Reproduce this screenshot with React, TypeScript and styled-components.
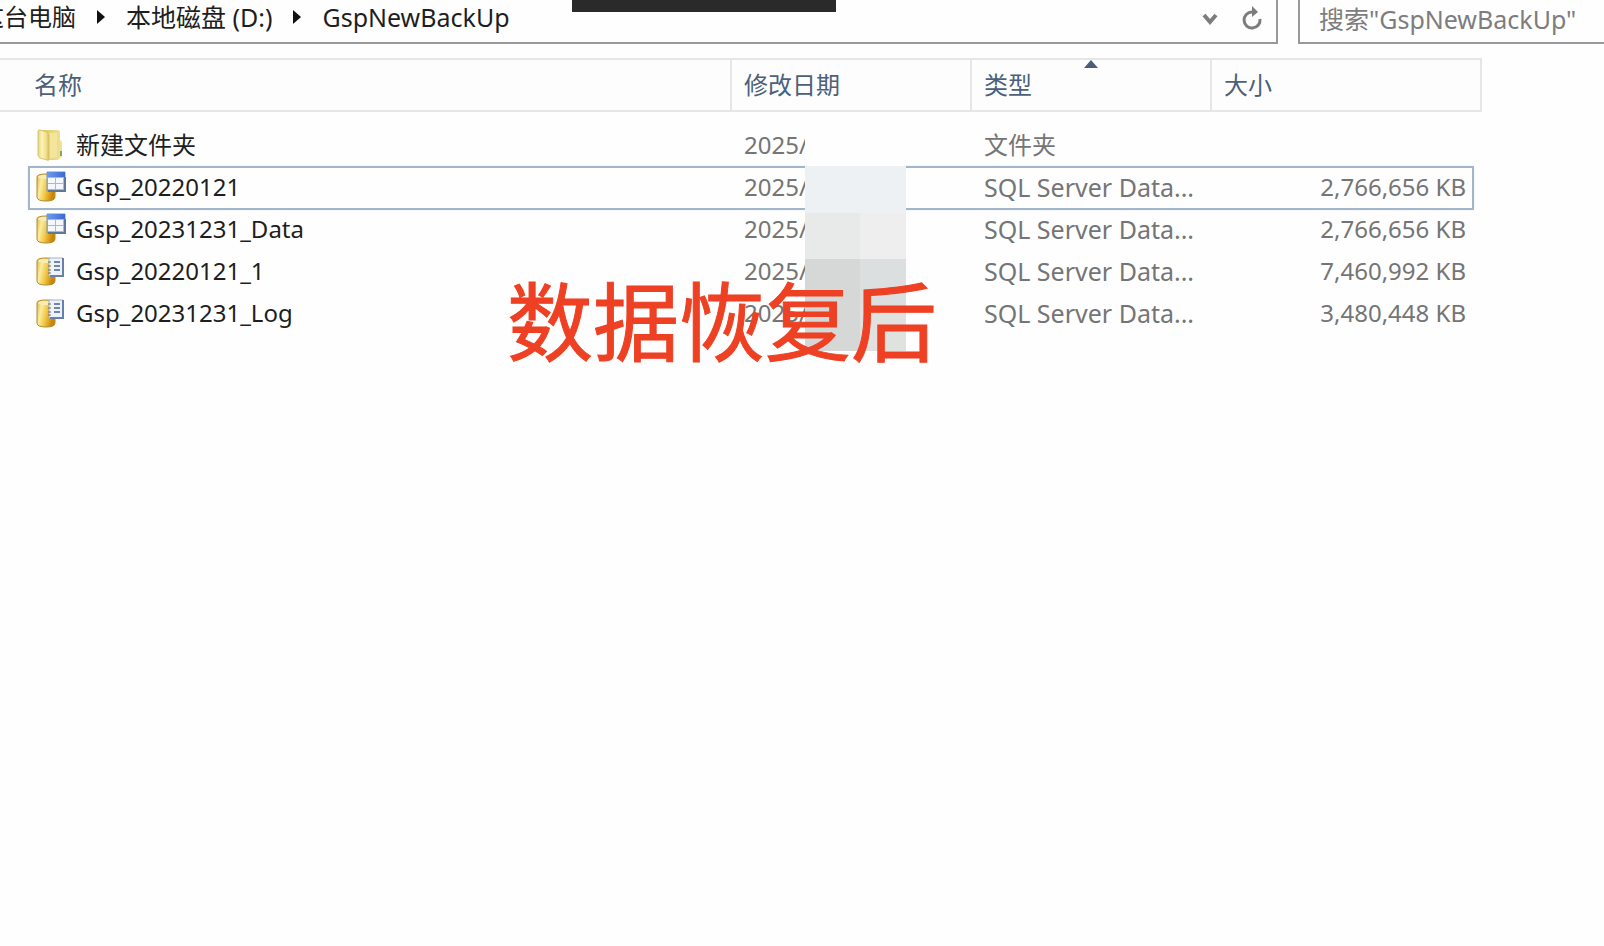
import React from "react";
import styled, { createGlobalStyle } from "styled-components";

const GlobalStyle = createGlobalStyle`
  * { box-sizing: border-box; }
  body {
    margin: 0;
    background: #fefefe;
    color: #1e1e1e;
    font-family: "Noto Sans", "Noto Sans CJK SC", sans-serif;
    font-size: 24px;
    line-height: 32px;
    overflow-x: hidden;
  }
`;

const Window = styled.div`
  position: relative;
  min-height: 100vh;
  overflow: hidden;
`;

const TopBar = styled.header`
  display: flex;
  gap: 20px;
  height: 44px;
`;

const AddressBar = styled.div`
  flex: 1;
  min-width: 0;
  display: flex;
  justify-content: space-between;
  overflow: hidden;
  border: solid #999;
  border-width: 0 2px 2px 0;
`;

const Crumbs = styled.nav`
  display: flex;
  align-items: center;
  gap: 20px;
  height: 34px;
  margin-left: -20px;
  white-space: nowrap;
`;

const Crumb = styled.a<{ $large?: boolean }>`
  color: #1e1e1e;
  font-size: ${(p) => (p.$large ? 25 : 24)}px;
  text-decoration: none;
`;

const BarActions = styled.div`
  display: flex;
  align-items: center;
  gap: 20px;
  height: 38px;
  padding-right: 12px;
`;

const IconButton = styled.button`
  display: flex;
  padding: 0;
  border: 0;
  background: none;
  color: #7c7c7c;
`;

const SearchBox = styled.div`
  flex: 0 0 306px;
  border: solid #999;
  border-width: 0 0 2px 2px;
`;

const SearchInput = styled.input`
  display: block;
  width: 100%;
  height: 38px;
  padding: 0 0 0 19px;
  border: 0;
  outline: 0;
  background: none;
  font: inherit;
  font-size: 25px;
  &::placeholder { color: #7d7d7d; opacity: 1; }
`;

const DarkTab = styled.div`
  position: absolute;
  top: 0;
  left: 572px;
  width: 264px;
  height: 12px;
  background: #2a2a2a;
`;

const FileArea = styled.main`
  position: relative;
  padding: 14px 122px 0 0;
`;

const FileTable = styled.table`
  width: 100%;
  table-layout: fixed;
  border-collapse: separate;
  border-spacing: 0;
  tbody::before {
    content: "";
    display: block;
    height: 12px;
  }
`;

const Column = styled.col<{ $width?: number }>`
  width: ${(p) => (p.$width ? p.$width + "px" : "auto")};
`;

const HeadCell = styled.th<{ $first?: boolean }>`
  position: relative;
  height: 54px;
  padding: 0 0 0 ${(p) => (p.$first ? 34 : 12)}px;
  border: solid #e6e6e6;
  border-width: 2px 2px 2px 0;
  background: #fdfdfd;
  color: #4c607a;
  font-weight: 400;
  text-align: left;
`;

const SortArrow = styled.svg`
  position: absolute;
  top: 0;
  left: 50%;
  margin-left: -7px;
`;

const FileRow = styled.tr`
  position: relative;
`;

const FocusFrame = styled.span`
  position: absolute;
  inset: 0 8px -2px 28px;
  border: 2px solid #a3b5cb;
  box-shadow: 0 0 1px #cfe6f2;
  pointer-events: none;
`;

const Cell = styled.td<{ $right?: boolean; $large?: boolean }>`
  height: 42px;
  padding: 0 ${(p) => (p.$right ? 16 : 0)}px 0 12px;
  color: #757575;
  font-size: ${(p) => (p.$large ? 25 : 24)}px;
  text-align: ${(p) => (p.$right ? "right" : "left")};
  white-space: nowrap;
`;

const NameCell = styled(Cell)`
  padding: 0 0 0 34px;
  color: #1e1e1e;
`;

const Name = styled.span`
  display: flex;
  align-items: center;
  gap: 10px;
`;

const Mosaic = styled.div`
  position: absolute;
  top: 86px;
  right: 698px;
  width: 101px;
  display: grid;
  grid-template-columns: 55px 46px;
  grid-template-rows: 36px 47px 46px 46px 46px;
`;

const Tile = styled.div<{ $color: string; $wide?: boolean }>`
  grid-column: ${(p) => (p.$wide ? "span 2" : "auto")};
  background: ${(p) => p.$color};
`;

const Caption = styled.div`
  position: absolute;
  top: 266px;
  left: 507px;
  color: #ee4023;
  font-family: "Noto Sans CJK SC", sans-serif;
  font-size: 86px;
  line-height: 104px;
  white-space: nowrap;
  -webkit-text-stroke: 1px #ee4023;
`;

const CrumbArrow = () => (
  <svg width="10" height="16" viewBox="0 0 10 16" aria-hidden="true">
    <path d="M1 1 9 8 1 15Z" fill="#111" />
  </svg>
);

const FolderIcon = () => (
  <svg width="32" height="34" viewBox="0 0 32 34" aria-hidden="true">
    <defs>
      <linearGradient id="folderFront" x2="1">
        <stop offset="0" stopColor="#e6d478" />
        <stop offset=".35" stopColor="#fbf3b8" />
        <stop offset=".75" stopColor="#f0e08c" />
        <stop offset="1" stopColor="#d2b850" />
      </linearGradient>
      <linearGradient id="folderBack" x2="1">
        <stop offset="0" stopColor="#d9c464" />
        <stop offset="1" stopColor="#f1e394" />
      </linearGradient>
    </defs>
    <path d="M5 2h18q3 0 3 2v8q2 1 2 3v13q0 2-2 2l-2 2H13Z" fill="url(#folderBack)" />
    <path d="M15 5h8v24l-8 2Z" fill="#f3e69c" />
    <path d="M4 3q0-1 2-1l7 2q2 1 2 3v24q0 2-2 1l-7-2q-2-1-2-3Z" fill="url(#folderFront)" stroke="#d8c468" />
    <path d="M27 23v5" stroke="#7ea27c" strokeWidth="2" />
  </svg>
);

const DatabaseIcon = ({ log }: { log?: boolean }) => (
  <svg width="32" height="34" viewBox="0 0 32 34" aria-hidden="true">
    <defs>
      <linearGradient id="drum" x2="1" y2=".3">
        <stop offset="0" stopColor="#d9b64a" />
        <stop offset=".3" stopColor="#fbec9f" />
        <stop offset=".6" stopColor="#f1c946" />
        <stop offset="1" stopColor="#cb8508" />
      </linearGradient>
      <linearGradient id="bar" x2="1">
        <stop offset="0" stopColor="#6f9bee" />
        <stop offset="1" stopColor="#3a6bd2" />
      </linearGradient>
    </defs>
    <path d="M3 7q0-3 9-3t9 3v20q0 4-9 4T3 27Z" fill="url(#drum)" stroke="#b58a2b" />
    <ellipse cx="12" cy="7" rx="8" ry="2" fill="#f8edaf" />
    {log ? (
      <>
        <path d="M15 4h14v18H15Z" fill="#eef2f9" stroke="#a3b3cd" />
        <path d="M29 4v18H16" fill="none" stroke="#6880aa" strokeWidth="2" />
        <path d="M20 8h6M20 12h6M20 16h6" stroke="#7186ac" strokeWidth="2" />
        <path d="M14 8h3M14 12h3M14 16h3M14 19h3" stroke="#766f58" />
      </>
    ) : (
      <>
        <path d="M13 2h18v19H13Z" fill="#a9bad0" stroke="#7c94b5" />
        <path d="M13 2h18v5H13Z" fill="url(#bar)" />
        <path d="M14 8h7v5h-7ZM22 8h7v5h-7ZM14 14h7v5h-7ZM22 14h7v5h-7Z" fill="#f4f7fb" />
        <path d="M31 7v14H14" fill="none" stroke="#607898" strokeWidth="2" />
      </>
    )}
  </svg>
);

type Kind = "folder" | "data" | "log";

const files: { name: string; kind: Kind; size: string }[] = [
  { name: "新建文件夹", kind: "folder", size: "" },
  { name: "Gsp_20220121", kind: "data", size: "2,766,656 KB" },
  { name: "Gsp_20231231_Data", kind: "data", size: "2,766,656 KB" },
  { name: "Gsp_20220121_1", kind: "log", size: "7,460,992 KB" },
  { name: "Gsp_20231231_Log", kind: "log", size: "3,480,448 KB" },
];

export default function App() {
  return (
    <Window>
      <GlobalStyle />
      <TopBar>
        <AddressBar>
          <Crumbs aria-label="地址">
            <Crumb href="#pc">这台电脑</Crumb>
            <CrumbArrow />
            <Crumb href="#d" $large>本地磁盘 (D:)</Crumb>
            <CrumbArrow />
            <Crumb href="#backup" $large>GspNewBackUp</Crumb>
          </Crumbs>
          <BarActions>
            <IconButton aria-label="展开">
              <svg width="18" height="16" viewBox="0 0 18 16">
                <path d="m2 4 6 7 6-7" fill="none" stroke="currentColor" strokeWidth="4" />
              </svg>
            </IconButton>
            <IconButton aria-label="刷新">
              <svg width="24" height="26" viewBox="0 0 24 26">
                <path d="M12 6A8 8 0 1 0 20 13" fill="none" stroke="currentColor" strokeWidth="3" />
                <path d="M12 0 18 6 12 11Z" fill="currentColor" />
              </svg>
            </IconButton>
          </BarActions>
        </AddressBar>
        <SearchBox>
          <SearchInput type="text" aria-label="搜索" placeholder={'搜索"GspNewBackUp"'} />
        </SearchBox>
      </TopBar>
      <DarkTab />
      <FileArea>
        <FileTable>
          <colgroup>
            <Column />
            <Column $width={240} />
            <Column $width={240} />
            <Column $width={270} />
          </colgroup>
          <thead>
            <tr>
              <HeadCell $first>名称</HeadCell>
              <HeadCell>修改日期</HeadCell>
              <HeadCell>
                类型
                <SortArrow width="14" height="8" viewBox="0 0 14 8" aria-hidden="true">
                  <path d="M0 8 7 0l7 8Z" fill="#4c5d77" />
                </SortArrow>
              </HeadCell>
              <HeadCell>大小</HeadCell>
            </tr>
          </thead>
          <tbody>
            {files.map((f, i) => (
              <FileRow key={f.name}>
                <NameCell>
                  {i === 1 && <FocusFrame />}
                  <Name>
                    {f.kind === "folder" ? <FolderIcon /> : <DatabaseIcon log={f.kind === "log"} />}
                    {f.name}
                  </Name>
                </NameCell>
                <Cell>2025/</Cell>
                <Cell $large={f.kind !== "folder"}>{f.kind === "folder" ? "文件夹" : "SQL Server Data..."}</Cell>
                <Cell $right>{f.size}</Cell>
              </FileRow>
            ))}
          </tbody>
        </FileTable>
        <Mosaic>
          <Tile $color="#fefefe" $wide />
          <Tile $color="#eef1f4" $wide />
          <Tile $color="#e8eaea" />
          <Tile $color="#eeeeee" />
          <Tile $color="#d6d8d8" />
          <Tile $color="#dbdfe0" />
          <Tile $color="#d6d8d7" />
          <Tile $color="#dfe2df" />
        </Mosaic>
      </FileArea>
      <Caption>数据恢复后</Caption>
    </Window>
  );
}
